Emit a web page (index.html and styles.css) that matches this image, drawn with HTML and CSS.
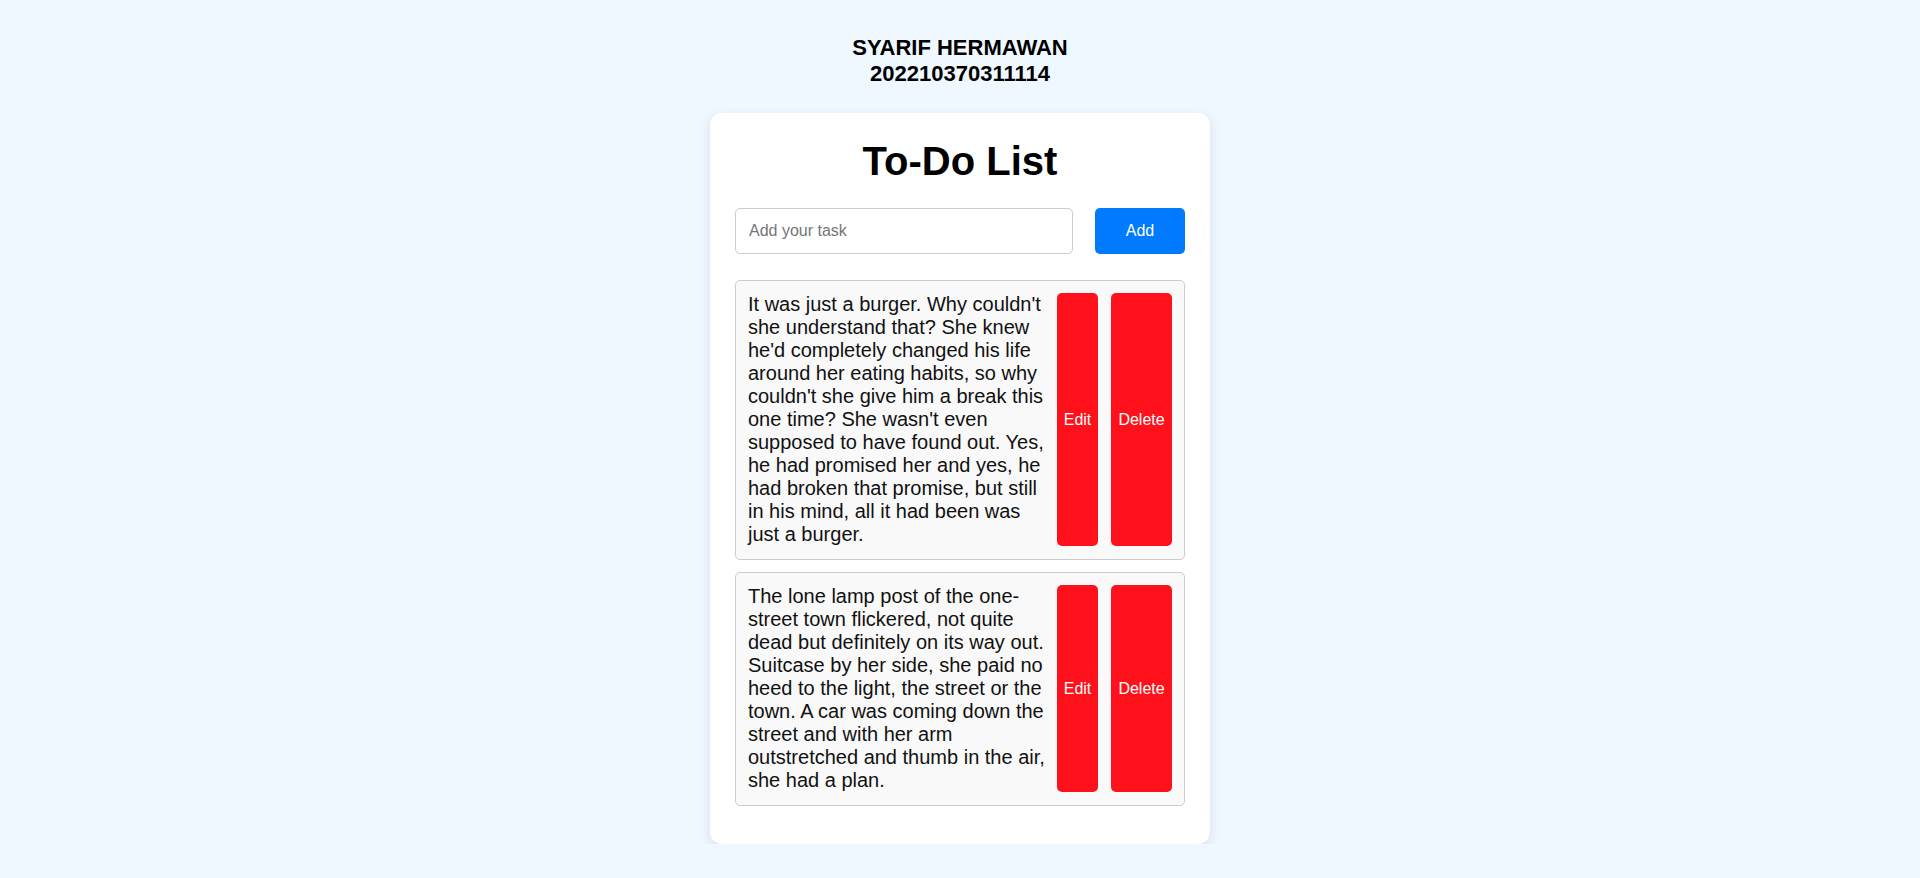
FILE: index.html
```html
<!DOCTYPE html>
<html lang="en">
<head>
<meta charset="utf-8">
<title>To-Do List</title>
<link rel="stylesheet" href="styles.css">
</head>
<body>
<header class="owner">
  <div>SYARIF HERMAWAN</div>
  <div>202210370311114</div>
</header>
<main class="card">
  <h1 class="title">To-Do List</h1>
  <div class="add-row">
    <input class="task-input" type="text" placeholder="Add your task">
    <button class="btn-add">Add</button>
  </div>
  <ul class="list">
    <li class="item">
      <span class="item-text">It was just a burger. Why couldn't she understand that? She knew he'd completely changed his life around her eating habits, so why couldn't she give him a break this one time? She wasn't even supposed to have found out. Yes, he had promised her and yes, he had broken that promise, but still in his mind, all it had been was just a burger.</span>
      <button class="btn btn-edit">Edit</button>
      <button class="btn btn-delete">Delete</button>
    </li>
    <li class="item">
      <span class="item-text">The lone lamp post of the one-street town flickered, not quite dead but definitely on its way out. Suitcase by her side, she paid no heed to the light, the street or the town. A car was coming down the street and with her arm outstretched and thumb in the air, she had a plan.</span>
      <button class="btn btn-edit">Edit</button>
      <button class="btn btn-delete">Delete</button>
    </li>
  </ul>
</main>
</body>
</html>
```

FILE: styles.css
```css
* { box-sizing: border-box; }
html, body { margin: 0; padding: 0; }
body {
  background: #eff7ff;
  font-family: "Liberation Sans", Arial, sans-serif;
  color: #111;
  display: flex;
  flex-direction: column;
  align-items: center;
  padding-top: 35px;
}
.owner {
  font-size: 22px;
  line-height: 26px;
  font-weight: bold;
  text-align: center;
  color: #000;
}
.card {
  margin-top: 26px;
  width: 500px;
  background: #fff;
  border-radius: 12px;
  box-shadow: 0 4px 12px rgba(40, 70, 110, 0.12);
  padding: 25px 25px 26px;
}
.title {
  margin: 0 0 24px;
  text-align: center;
  font-size: 40px;
  line-height: 46px;
  font-weight: bold;
  color: #000;
}
.add-row {
  display: flex;
  align-items: stretch;
  gap: 22px;
  margin-bottom: 26px;
}
.task-input {
  flex: 1;
  height: 46px;
  border: 1px solid #ccc;
  border-radius: 5px;
  padding: 0 13px;
  font-family: "Liberation Sans", Arial, sans-serif;
  font-size: 16px;
  color: #111;
  outline: none;
}
.task-input::placeholder { color: #757575; }
.btn-add {
  width: 90px;
  height: 46px;
  border: none;
  border-radius: 5px;
  background: #007bff;
  color: #fff;
  font-family: "Liberation Sans", Arial, sans-serif;
  font-size: 16px;
}
.list {
  list-style: none;
  margin: 0;
  padding: 0;
}
.item {
  display: flex;
  align-items: stretch;
  background: #f9f9f9;
  border: 1px solid #ccc;
  border-radius: 5px;
  padding: 12px 12px 13px;
  margin-bottom: 12px;
}
.item-text {
  flex: 1;
  font-size: 20px;
  line-height: 23px;
  margin-right: 9px;
}
.btn {
  border: none;
  border-radius: 5px;
  background: #fe111a;
  color: #fff;
  font-family: "Liberation Sans", Arial, sans-serif;
  font-size: 16px;
  padding: 0;
  flex: none;
}
.btn-edit { width: 41px; }
.btn-delete { width: 61px; margin-left: 13px; }
```
